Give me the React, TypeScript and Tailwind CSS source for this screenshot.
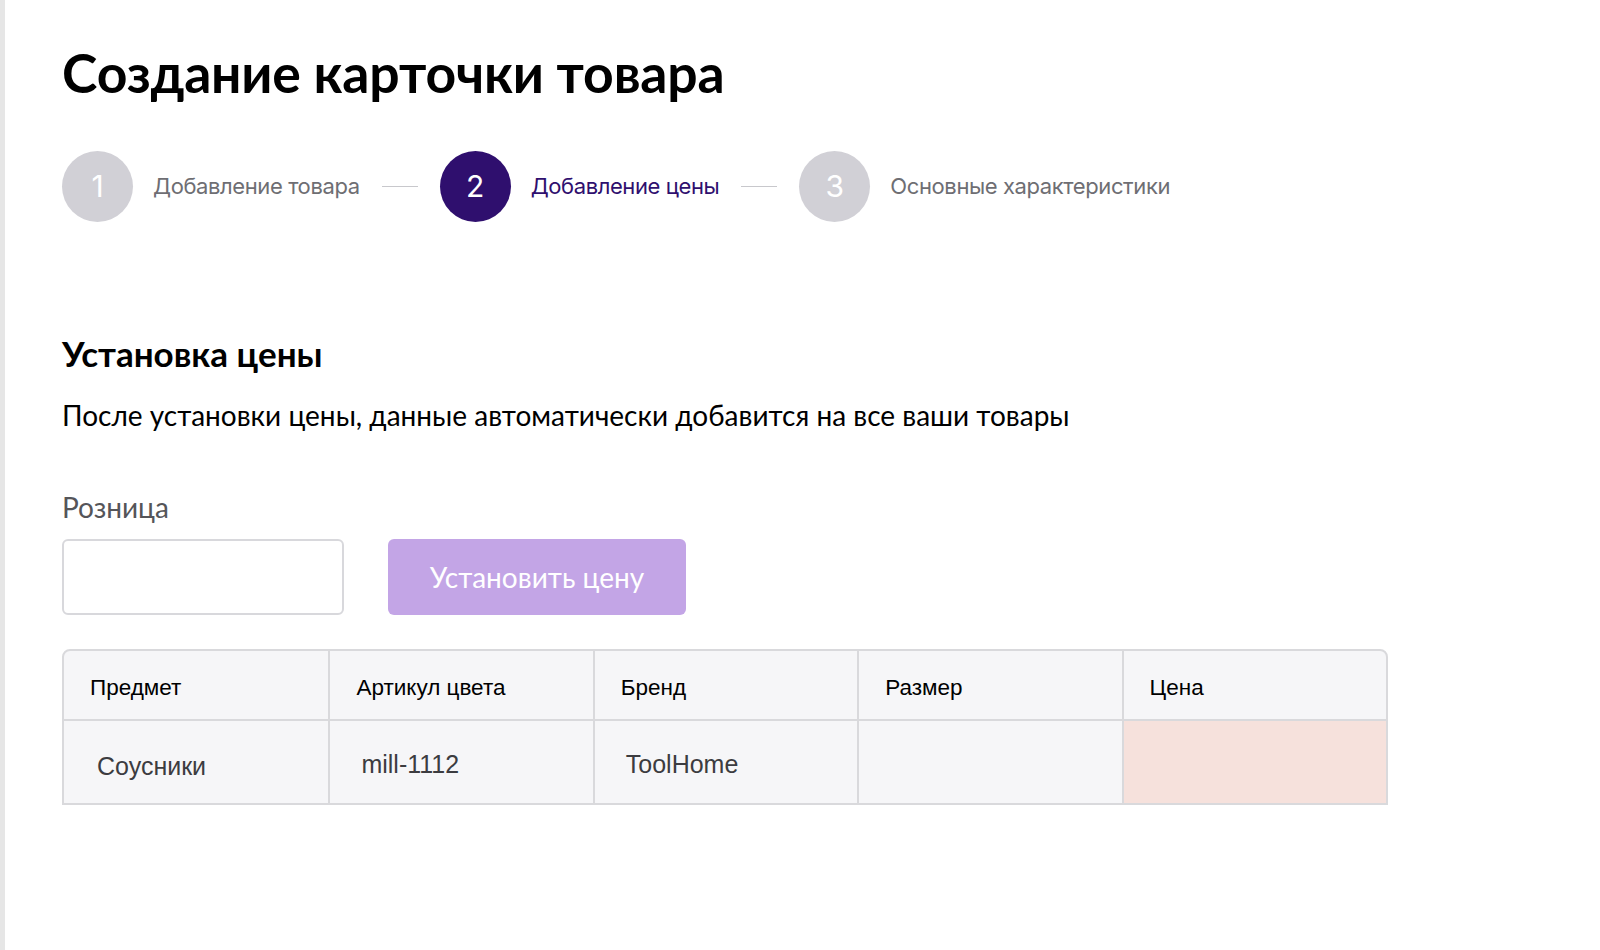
import React from 'react';

const STEPS = [
    { n: 1, label: "Добавление товара", active: false },
    { n: 2, label: "Добавление цены", active: true },
    { n: 3, label: "Основные характеристики", active: false }
];

const COLUMNS = ["Предмет", "Артикул цвета", "Бренд", "Размер", "Цена"];
const ROW = ["Соусники", "mill-1112", "ToolHome", "", ""];

const App = () => {
    return (
        <div className="min-h-[950px] w-full bg-white flex">
            <div className="w-[5px] shrink-0 bg-[#e6e6e6]" />
            <main className="flex-1 pl-[57px] pt-[42px]">
                <h1 className="text-[53.5px] leading-[60px] font-bold text-black tracking-[-0.2px]" style={{ fontFamily: 'Lato, sans-serif' }}>
                    Создание карточки товара
                </h1>

                {/* Steps */}
                <div className="mt-[49px] flex items-center" style={{ fontFamily: 'Inter, sans-serif' }}>
                    {STEPS.map((s, i) => (
                        <React.Fragment key={s.n}>
                            {i > 0 && <div className="mx-[22px] w-[36px] h-px bg-[#c8c8cc]" />}
                            <div className="flex items-center">
                                <div className={`w-[71px] h-[71px] rounded-full flex items-center justify-center text-[30px] text-white ${s.active ? 'bg-[#2f0f6e]' : 'bg-[#d1d0d6]'}`}>
                                    {s.n}
                                </div>
                                <span className={`ml-[20px] text-[22px] tracking-[-0.4px] ${s.active ? 'text-[#2f0f6e]' : 'text-[#6e6e73]'}`}>
                                    {s.label}
                                </span>
                            </div>
                        </React.Fragment>
                    ))}
                </div>

                {/* Price section */}
                <section className="mt-[110px]" style={{ fontFamily: 'Lato, sans-serif' }}>
                    <h2 className="text-[35px] leading-[42px] font-bold text-black">Установка цены</h2>
                    <p className="mt-[24px] text-[28px] leading-[34px] text-black">
                        После установки цены, данные автоматически добавится на все ваши товары
                    </p>
                    <div className="mt-[58px] text-[28px] leading-[34px] text-[#555559]">Розница</div>
                    <div className="mt-[15px] flex items-center gap-[44px]">
                        <input className="w-[282px] h-[76px] rounded-[6px] border-2 border-[#d8d8dc] bg-white outline-none px-4 text-[22px]" />
                        <button className="w-[298px] h-[76px] rounded-[6px] bg-[#c3a5e6] text-white text-[28px]">
                            Установить цену
                        </button>
                    </div>
                </section>

                {/* Table */}
                <div className="mt-[34px] w-[1326px] rounded-t-[8px] border-2 border-[#d9d9dc] bg-[#f6f6f8] overflow-hidden" style={{ fontFamily: '"Liberation Sans", Arial, sans-serif' }}>
                    <div className="grid grid-cols-5 h-[70px] border-b-2 border-[#d9d9dc]">
                        {COLUMNS.map((c, i) => (
                            <div key={c} className={`flex items-center pl-[26px] pt-[5px] text-[22.5px] text-black ${i > 0 ? 'border-l-2 border-[#d9d9dc]' : ''}`}>
                                {c}
                            </div>
                        ))}
                    </div>
                    <div className="grid grid-cols-5 h-[82px]">
                        {ROW.map((v, i) => (
                            <div key={i} className={`flex items-center text-[25px] text-[#3c3c40] ${i === 0 ? 'pl-[33px] pt-[10px]' : 'pl-[31px] pt-[6px]'} ${i > 0 ? 'border-l-2 border-[#d9d9dc]' : ''} ${i === 4 ? 'bg-[#f6e1dc]' : ''}`}>
                                {v}
                            </div>
                        ))}
                    </div>
                </div>
            </main>
        </div>
    );
};

export default App;
